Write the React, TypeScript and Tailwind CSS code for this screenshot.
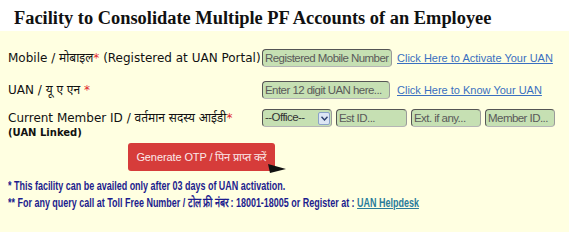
import React from 'react'

/* Consolidate PF accounts — claim form strip */

const inputCls =
  'h-[18px] rounded-[4px] border border-t-[#555] border-l-[#555] border-r-[#9a9a9a] border-b-[#b5b5b5] bg-[#c6e0b3] px-[2px] text-[11.5px] tracking-[-0.55px] text-[#555] placeholder:text-[#5a5a5a] outline-none'

const labelFont = { fontFamily: '"DejaVu Sans", "Noto Sans", sans-serif' }
const arial = { fontFamily: '"Liberation Sans", sans-serif' }

export default function App() {
  return (
    <div className="w-[569px] h-[232px] bg-[#ffffe1] overflow-hidden">
      {/* ═══ TITLE ═══ */}
      <div className="h-[31px] bg-white pl-[14px] pt-[7px]">
        <h1
          className="text-[18.4px] font-bold leading-[22px] text-[#111]"
          style={{ fontFamily: '"Liberation Serif", serif' }}
        >
          Facility to Consolidate Multiple PF Accounts of an Employee
        </h1>
      </div>

      {/* ═══ FORM ═══ */}
      <div className="pl-[8px] pt-[18px] text-[12px] text-[#111]" style={labelFont}>
        <div className="flex items-center h-[18px]">
          <div className="w-[254px] whitespace-nowrap">
            Mobile / मोबाइल<span className="text-[#e0262d]">*</span> (Registered at UAN Portal)
          </div>
          <input className={`${inputCls} w-[130px]`} placeholder="Registered Mobile Number." style={arial} />
          <a href="#" className="ml-[5px] text-[11px] text-[#3a6fc0] underline" style={arial}>
            Click Here to Activate Your UAN
          </a>
        </div>

        <div className="flex items-center h-[18px] mt-[14px]">
          <div className="w-[254px]">
            UAN / यू ए एन <span className="text-[#e0262d]">*</span>
          </div>
          <input className={`${inputCls} w-[128px]`} placeholder="Enter 12 digit UAN here..." style={arial} />
          <a href="#" className="ml-[7px] text-[11px] text-[#3a6fc0] underline" style={arial}>
            Click Here to Know Your UAN
          </a>
        </div>

        <div className="flex items-start mt-[10px]">
          <div className="w-[254px]">
            <div className="leading-[18px]">
              Current Member ID / वर्तमान सदस्य आईडी<span className="text-[#e0262d]">*</span>
            </div>
            <div className="text-[10px] font-bold leading-[12px]">(UAN Linked)</div>
          </div>
          <div className="flex items-center gap-[4px]" style={arial}>
            <div className={`${inputCls} w-[70px] flex items-center justify-between pr-[1px]`}>
              <span className="text-[#333]">--Office--</span>
              <span className="flex h-[13px] w-[12px] items-center justify-center rounded-[2px] border border-[#8aa2c8] bg-[#dde6f4]">
                <svg width="7" height="5" viewBox="0 0 7 5">
                  <path d="M0.5 0.8 L3.5 4 L6.5 0.8" fill="none" stroke="#2b3f6b" strokeWidth="1.4" />
                </svg>
              </span>
            </div>
            <input className={`${inputCls} w-[71px]`} placeholder="Est ID..." />
            <input className={`${inputCls} w-[70px]`} placeholder="Ext. if any..." />
            <input className={`${inputCls} w-[70px]`} placeholder="Member ID..." />
          </div>
        </div>

        {/* ═══ BUTTON ═══ */}
        <div className="relative mt-[4px] ml-[120px] w-[147px] h-[28px]">
          <button
            className="block h-[28px] w-[147px] whitespace-nowrap rounded-[3px] bg-[#d63c3a] text-[11px] tracking-[-0.1px] text-[#fbeaea]"
            style={arial}
          >
            Generate OTP / पिन प्राप्त करें
          </button>
          <svg className="absolute left-[140px] top-[21px]" width="18" height="9" viewBox="0 0 18 9">
            <path d="M0 0 L18 5 L2 9 Z" fill="#111" />
          </svg>
        </div>

        {/* ═══ NOTES ═══ */}
        <div
          className="mt-[6px] w-[620px] origin-left scale-x-[0.69] text-[13px] font-bold leading-[17px] text-[#1c1c8e] whitespace-nowrap"
          style={arial}
        >
          <p>* This facility can be availed only after 03 days of UAN activation.</p>
          <p>
            ** For any query call at Toll Free Number / टोल फ्री नंबर : 18001-18005 or Register at :{' '}
            <a href="#" className="text-[#2a7b9b] underline">UAN Helpdesk</a>
          </p>
        </div>
      </div>
    </div>
  )
}
